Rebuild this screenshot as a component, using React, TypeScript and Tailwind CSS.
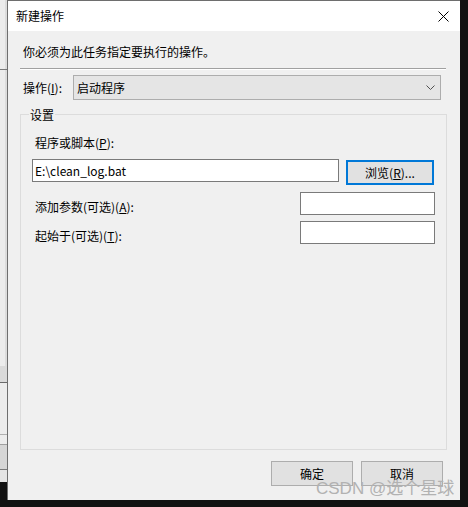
import React from "react";

const font = {
  fontFamily: '"Microsoft YaHei UI", "Noto Sans CJK SC", "Noto Sans", sans-serif',
};

export default function App() {
  return (
    <div
      className="relative flex h-[507px] w-[468px] overflow-hidden bg-[#111111] text-[12px] text-black"
      style={font}
    >
      {/* background window strip on the left */}
      <div className="flex h-[482px] w-[7px] flex-col bg-[#ececec]">
        <div className="h-[69px] border-r-2 border-[#dcdcdc]" />
        <div className="h-[1px] bg-[#7a7a7a]" />
        <div className="h-[296px] border-r-2 border-[#dcdcdc]" />
        <div className="h-[16px] bg-[#dadada]" />
        <div className="h-[1px] bg-[#6a6a6a]" />
        <div className="h-[51px] bg-[#ececec]" />
        <div className="h-[1px] bg-[#b0b0b0]" />
        <div className="h-[9px] bg-[#ececec]" />
        <div className="h-[1px] bg-[#a0a0a0]" />
        <div className="h-[24px] bg-[#d6d6d6]" />
        <div className="h-[1px] bg-[#7a7a7a]" />
        <div className="flex-1 bg-[#e4e4e4]" />
      </div>

      {/* dialog */}
      <div className="flex h-[500px] w-[453px] flex-col border-l border-t border-[#6e6e6e] bg-[#f0f0f0]">
        {/* title bar */}
        <div className="flex h-[30px] items-center justify-between bg-white pl-[8px] pr-[10px]">
          <span className="leading-[16px]">新建操作</span>
          <svg width="11" height="11" viewBox="0 0 11 11" className="mr-[1px]">
            <path d="M0.5 0.5 L10.5 10.5 M10.5 0.5 L0.5 10.5" stroke="#000" strokeWidth="1" />
          </svg>
        </div>

        {/* body */}
        <div className="flex flex-1 flex-col pl-[12px] pr-[13px]">
          <div className="ml-[3px] mt-[13px] leading-[16px]">你必须为此任务指定要执行的操作。</div>
          <div className="mr-[1px] mt-[8px] h-[2px] border-b border-t border-b-white border-t-[#a0a0a0]" />

          {/* action row */}
          <div className="mt-[5px] flex h-[25px] items-center">
            <span className="ml-[3px] w-[50px] leading-[16px]">
              操作(<u>I</u>):
            </span>
            <div className="flex h-[25px] w-[368px] items-center justify-between border border-[#adadad] bg-[#e5e5e5] pl-[3px] pr-[5px]">
              <span className="leading-[16px]">启动程序</span>
              <svg width="9" height="5" viewBox="0 0 9 5">
                <path d="M0.5 0.5 L4.5 4.5 L8.5 0.5" fill="none" stroke="#505050" strokeWidth="1" />
              </svg>
            </div>
          </div>

          {/* group box */}
          <div className="mt-[14px] flex h-[336px] flex-col border border-[#dcdcdc] pl-[11px]">
            <span className="-mt-[8px] ml-[-3px] w-fit bg-[#f0f0f0] px-[1px] leading-[16px]">设置</span>

            <span className="ml-[3px] mt-[12px] leading-[16px]">
              程序或脚本(<u>P</u>):
            </span>

            <div className="mt-[8px] flex items-start">
              <div className="flex h-[23px] w-[307px] items-center border border-[#7a7a7a] bg-white pl-[2px] leading-[16px]">
                E:\clean_log.bat
              </div>
              <div className="ml-[7px] mt-[1px] flex h-[25px] w-[88px] items-center justify-center border-2 border-[#0078d7] bg-[#e1e1e1] leading-[16px]">
                浏览(<u>R</u>)...
              </div>
            </div>

            <div className="mt-[7px] flex items-start">
              <span className="ml-[3px] mt-[7px] leading-[16px]">
                添加参数(可选)(<u>A</u>):
              </span>
              <div className="ml-auto mr-[11px] h-[23px] w-[135px] border border-[#7a7a7a] bg-white" />
            </div>

            <div className="mt-[6px] flex items-start">
              <span className="ml-[3px] mt-[7px] leading-[16px]">
                起始于(可选)(<u>T</u>):
              </span>
              <div className="ml-auto mr-[11px] h-[23px] w-[135px] border border-[#7a7a7a] bg-white" />
            </div>
          </div>

          {/* buttons */}
          <div className="mt-[11px] flex justify-end gap-[8px] pr-[4px]">
            <div className="flex h-[25px] w-[82px] items-center justify-center border border-[#adadad] bg-[#e1e1e1] leading-[16px]">
              确定
            </div>
            <div className="flex h-[25px] w-[82px] items-center justify-center border border-[#adadad] bg-[#e1e1e1] leading-[16px]">
              取消
            </div>
          </div>
        </div>
      </div>

      {/* watermark */}
      <div
        className="pointer-events-none absolute left-[316px] top-[482px] text-[17px] leading-[14px] text-[#b2b2b2]"
        style={{ fontFamily: '"Liberation Sans", "Noto Sans CJK SC", sans-serif' }}
      >
        CSDN @选个星球
      </div>
    </div>
  );
}
